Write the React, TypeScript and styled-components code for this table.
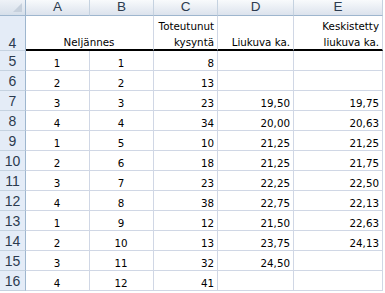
import React from 'react'
import styled, { createGlobalStyle } from 'styled-components'

const GlobalStyle = createGlobalStyle`
  html, body {
    margin: 0;
    padding: 0;
    background: #ffffff;
  }
`

const cols = ['A', 'B', 'C', 'D', 'E']

type Row = { n: number; a: number; b: number; c: number; d?: string; e?: string }

const rows: Row[] = [
  { n: 5, a: 1, b: 1, c: 8 },
  { n: 6, a: 2, b: 2, c: 13 },
  { n: 7, a: 3, b: 3, c: 23, d: '19,50', e: '19,75' },
  { n: 8, a: 4, b: 4, c: 34, d: '20,00', e: '20,63' },
  { n: 9, a: 1, b: 5, c: 10, d: '21,25', e: '21,25' },
  { n: 10, a: 2, b: 6, c: 18, d: '21,25', e: '21,75' },
  { n: 11, a: 3, b: 7, c: 23, d: '22,25', e: '22,50' },
  { n: 12, a: 4, b: 8, c: 38, d: '22,75', e: '22,13' },
  { n: 13, a: 1, b: 9, c: 12, d: '21,50', e: '22,63' },
  { n: 14, a: 2, b: 10, c: 13, d: '23,75', e: '24,13' },
  { n: 15, a: 3, b: 11, c: 32, d: '24,50' },
  { n: 16, a: 4, b: 12, c: 41 },
]

const App = () => {
  return (
    <>
      <GlobalStyle />
      <Sheet>
        <Corner>
          <CornerMark />
        </Corner>
        {cols.map((c) => (
          <ColHeader key={c}>{c}</ColHeader>
        ))}

        <RowHeader $tall>4</RowHeader>
        <Cell $align="center" $thick $span={2}>
          Neljännes
        </Cell>
        <Cell $align="right" $thick>
          <Wrap>Toteutunut</Wrap>
          <Wrap>kysyntä</Wrap>
        </Cell>
        <Cell $align="right" $thick>
          <Wrap>Liukuva ka.</Wrap>
        </Cell>
        <Cell $align="right" $thick>
          <Wrap>Keskistetty</Wrap>
          <Wrap>liukuva ka.</Wrap>
        </Cell>

        {rows.map((r) => (
          <React.Fragment key={r.n}>
            <RowHeader>{r.n}</RowHeader>
            <Cell $align="center">{r.a}</Cell>
            <Cell $align="center">{r.b}</Cell>
            <Cell $align="right">{r.c}</Cell>
            <Cell $align="right">{r.d ?? ''}</Cell>
            <Cell $align="right">{r.e ?? ''}</Cell>
          </React.Fragment>
        ))}
      </Sheet>
    </>
  )
}

const Sheet = styled.div`
  display: grid;
  grid-template-columns: 26px 64px 64px 64px 76px 89px;
  grid-template-rows: 16px 35px repeat(12, 20px);
  width: max-content;
  font-family: 'DejaVu Sans', Tahoma, sans-serif;
  font-size: 10.3px;
  color: #000;
`

const headerBase = `
  box-sizing: border-box;
  font-family: 'Liberation Sans', Arial, sans-serif;
  color: #2c3b4f;
  border-right: 1px solid #9eb6ce;
  border-bottom: 1px solid #9eb6ce;
`

const Corner = styled.div`
  ${headerBase}
  position: relative;
  background: linear-gradient(#eef2f7, #d6dfea);
`

const CornerMark = styled.div`
  position: absolute;
  right: 3px;
  bottom: 3px;
  width: 0;
  height: 0;
  border-left: 9px solid transparent;
  border-bottom: 9px solid #c6d0dc;
`

const ColHeader = styled.div`
  ${headerBase}
  display: flex;
  justify-content: center;
  align-items: flex-start;
  font-size: 13.5px;
  line-height: 13px;
  padding-top: 0;
  background: linear-gradient(#f8fafc, #dce3ed);
  border-right-color: #c5d2e0;
`

const RowHeader = styled.div<{ $tall?: boolean }>`
  ${headerBase}
  display: flex;
  justify-content: center;
  align-items: ${(p) => (p.$tall ? 'flex-end' : 'center')};
  font-size: 14px;
  line-height: ${(p) => (p.$tall ? '14px' : '20px')};
  background: #e4ecf7;
  border-bottom-color: #c5d2e0;
`

const Cell = styled.div<{ $align: 'center' | 'right'; $thick?: boolean; $span?: number }>`
  box-sizing: border-box;
  display: flex;
  flex-direction: column;
  justify-content: flex-end;
  align-items: ${(p) => (p.$align === 'center' ? 'center' : 'flex-end')};
  grid-column: ${(p) => (p.$span ? `span ${p.$span}` : 'auto')};
  padding: 0 3px 0 2px;
  line-height: 13px;
  border-right: 1px solid #d0d7e5;
  border-bottom: ${(p) => (p.$thick ? '2px solid #000' : '1px solid #d0d7e5')};
  white-space: nowrap;
`

const Wrap = styled.span`
  line-height: 16.5px;
  margin-bottom: -1px;
`

export default App
